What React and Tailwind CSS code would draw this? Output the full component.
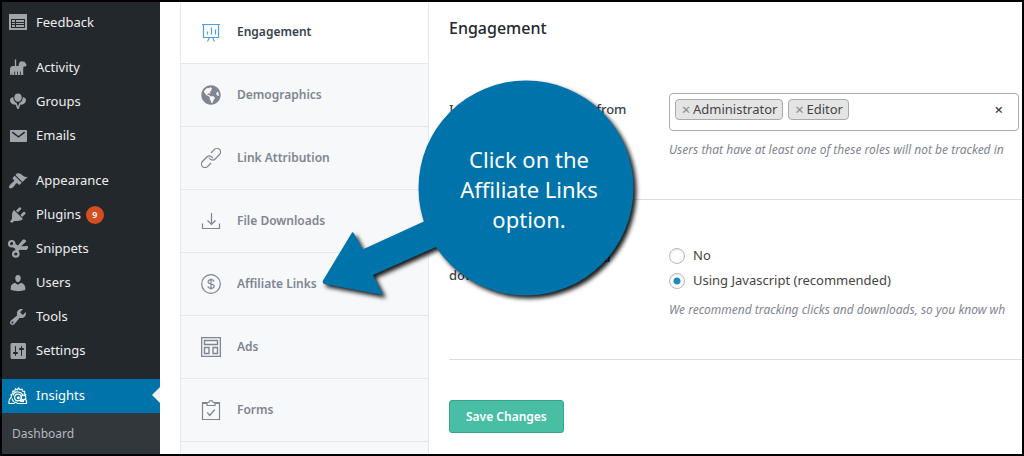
import React from "react";
import { FaGlobeAmericas } from "react-icons/fa";

const Dash = ({ children, className = "text-[#a0a5aa]" }) => (
  <svg viewBox="0 0 20 20" className={`size-5 shrink-0 fill-current ${className}`} aria-hidden="true">
    {children}
  </svg>
);

const menuIcons = {
  Feedback: (
    <Dash>
      <path fillRule="evenodd" d="M1 1h18v16H1zM3 6v9h14V6zM4 7h3v2H4zM4 10h3v1H4zM4 12h3v2H4zM8 7h8v2H8zM8 10h8v1H8zM8 12h8v2H8z" />
    </Dash>
  ),
  Activity: (
    <Dash>
      <path d="M6.800 1.500h1.400V8h2.300l.6-2.600c.3-1.300 1.300-2.200 2.600-2.200l1.800.6.800-.6.500 1.300c1 .5 1.700 1.600 1.700 2.900l-.9 1.100h-2.100l-.3 2.500V17h-2.200v-3.500h-.8V17H10v-3.500h-.8V17H7.100v-3.500h-.8V17H4.100v-3.500L3.500 17H2v-5.500C2 9.300 3 8 5 8h1.800z" />
    </Dash>
  ),
  Groups: (
    <Dash>
      <path d="M10 1.500c2.200 0 3.700 1.700 3.700 3.900S12.200 9.800 10 9.800 6.300 7.600 6.300 5.400 7.800 1.500 10 1.500z" />
      <path d="M5.200 5.300C3.400 5.100 2 6.500 2 8.300c0 2.300 1.700 3.900 3.700 4.200l2 .3L9.300 17h1.400l1.600-4.200 2-.3c2-.3 3.700-1.900 3.700-4.200 0-1.800-1.400-3.200-3.200-3-.1 2.500-1.300 4.700-3.300 5.500L10 14.500l-1.500-3.700C6.500 10 5.300 7.800 5.200 5.300z" />
    </Dash>
  ),
  Emails: (
    <Dash>
      <path fillRule="evenodd" d="M3 4h15c.6 0 1 .4 1 1v10c0 .6-.4 1-1 1H3c-.6 0-1-.4-1-1V5c0-.6.4-1 1-1zm7.500 7.800 6.700-5-1-1.200-5.700 4.300-5.700-4.300-1 1.200z" />
    </Dash>
  ),
  Appearance: (
    <Dash>
      <path d="M14.480 11.060L7.410 3.990l1.500-1.500c.5-.56 2.3-.47 3.510.32 1.210.8 1.430 1.280 2.910 2.100 1.180.64 2.450 1.260 4.450.85zm-.71.71L6.700 4.700 4.930 6.470c-.39.39-.39 1.020 0 1.410l1.060 1.060c.39.39.39 1.030 0 1.420-.6.6-1.430 1.110-2.210 1.690-.35.26-.7.53-1.010.84C1.430 14.230.4 16.080 1.400 17.070c.99 1 2.840-.03 4.180-1.360.31-.31.58-.66.85-1.020.57-.78 1.080-1.610 1.690-2.210.39-.39 1.020-.39 1.410 0l1.060 1.060c.39.39 1.020.39 1.410 0z" />
    </Dash>
  ),
  Plugins: (
    <Dash>
      <path d="M13.110 4.360L9.870 7.600 8 5.730l3.240-3.240c.35-.34 1.050-.2 1.560.32.52.51.66 1.210.31 1.550zm-8 1.770l.91-1.120 9.010 9.010-1.190.84c-.71.71-2.630 1.160-3.820 1.160H6.140L4.900 17.260c-.59.59-1.540.59-2.120 0-.59-.58-.59-1.530 0-2.120l1.240-1.240v-3.880c0-1.130.4-3.190 1.090-3.890zm7.260 3.970l3.240-3.240c.34-.35 1.040-.21 1.550.31.52.51.66 1.210.31 1.550l-3.240 3.250z" />
    </Dash>
  ),
  Snippets: (
    <Dash>
      <g fill="none" stroke="currentColor" strokeWidth="2.200">
        <circle cx="3.700" cy="4.700" r="2.700" />
        <circle cx="7.800" cy="15" r="2.700" />
      </g>
      <path d="M5.600 3.800 10 6.400 14.500.9c1.400-.9 3.300-.2 3.900 1.300l-5.200 5 6.700-.2c.6 1.900-.5 3.900-2.500 4.100l-5.800-.4-2 3-2.600-.7.3-3.200-3.700-2.400z" />
    </Dash>
  ),
  Users: (
    <Dash>
      <path d="M10 9.250c-2.270 0-2.730-3.440-2.730-3.440C7 4.020 7.820 2 9.970 2c2.160 0 2.980 2.020 2.710 3.810 0 0-.41 3.440-2.680 3.440zm0 2.570L12.720 10c2.390 0 4.520 2.330 4.520 4.530v2.490s-3.650 1.130-7.240 1.130c-3.650 0-7.240-1.130-7.240-1.130v-2.490c0-2.250 1.940-4.480 4.470-4.480z" />
    </Dash>
  ),
  Tools: (
    <Dash>
      <path d="M16.680 9.770c-1.340 1.340-3.300 1.670-4.950.99l-5.410 6.520c-.99.99-2.590.99-3.580 0s-.99-2.590 0-3.570l6.520-5.420c-.68-1.650-.35-3.610.99-4.950 1.280-1.280 3.120-1.620 4.720-1.060l-2.890 2.890 2.820 2.820 2.860-2.870c.53 1.580.18 3.390-1.080 4.650zM3.810 16.210c.4.39 1.040.39 1.430 0 .4-.4.4-1.040 0-1.430-.39-.4-1.030-.4-1.430 0-.39.39-.39 1.030 0 1.430z" />
    </Dash>
  ),
  Settings: (
    <Dash>
      <path d="M18 16V4c0-1.100-.4-2-1-2H4c-1.100 0-1.500.9-1.500 2v12c0 1.100.4 2 1.500 2h13c.6 0 1-.9 1-2zM8 11h1c.55 0 1 .45 1 1s-.45 1-1 1H8v1.500c0 .28-.22.5-.5.5s-.5-.22-.5-.5V13H6c-.55 0-1-.45-1-1s.45-1 1-1h1V5.500c0-.28.22-.5.5-.5s.5.22.5.5V11zm5-2h-1c-.55 0-1-.45-1-1s.45-1 1-1h1V5.500c0-.28.22-.5.5-.5s.5.22.5.5V7h1c.55 0 1 .45 1 1s-.45 1-1 1h-1v5.500c0 .28-.22.5-.5.5s-.5-.22-.5-.5V9z" />
    </Dash>
  ),
  Insights: (
    <Dash className="text-white">
      <g fill="none" stroke="currentColor" strokeWidth="1.200" strokeLinejoin="round">
        <path d="M3.500 11 3 8.500l2-.8L4.800 5l2 .2.700-2.500 1.800 1.200 1.300-2 1.300 1.900 2.100-.8.500 2.200 2.200.1-.3 2.200 1.300 1.200-1 1.500" />
        <path d="M5 9.500C6 6.500 8 5.500 10.500 6c2.500.3 4 1.800 4.500 3.500M3.500 11c-2 1.500-2.800 4-2.500 6.500h5l1-1.500 3 1.500h8.500c.4-2-.2-3.700-1.500-4.800M4 12.500 5.500 16" />
        <circle cx="10" cy="11.500" r="3.300" />
        <circle cx="15.500" cy="11.500" r="2.300" />
      </g>
      <circle cx="10.300" cy="11.800" r="1.500" />
      <path d="M12 14h4v2h-4z" />
    </Dash>
  ),
};

const menuGroups = [
  ["Feedback"],
  ["Activity", "Groups", "Emails"],
  ["Appearance", "Plugins", "Snippets", "Users", "Tools", "Settings"],
  ["Insights"],
];

const Line = ({ children, className = "" }) => (
  <svg viewBox="0 0 20 20" className={`size-5 shrink-0 fill-none stroke-current ${className}`} strokeWidth="1.200" aria-hidden="true">
    {children}
  </svg>
);

const tabs = [
  {
    name: "Engagement",
    icon: (
      <Line className="text-[#509fe2]">
        <path d="M1 2.500h18M2.500 2.500v13h15v-13M6.500 12.500v-3M10.500 12.500v-7M14.500 12.500v-5M8.500 15.500 6.500 19.500M11.500 15.500l2 4" />
      </Line>
    ),
  },
  { name: "Demographics", icon: <FaGlobeAmericas className="size-5 shrink-0" aria-hidden="true" /> },
  {
    name: "Link Attribution",
    icon: (
      <Line>
        <g transform="rotate(-45 10 10)">
          <path d="M6.500 13.600H1.500a3.600 3.600 0 0 1 0-7.200h6.300a3.600 3.600 0 0 1 3.200 5.200" />
          <path d="M13.500 6.400h5a3.600 3.600 0 0 1 0 7.200h-6.300a3.600 3.600 0 0 1-3.200-5.200" />
        </g>
      </Line>
    ),
  },
  {
    name: "File Downloads",
    icon: (
      <Line>
        <path d="M1.500 12.500v5h17v-5M10.500 2v11.500M6.500 9.500l4 4 4-4" />
      </Line>
    ),
  },
  {
    name: "Affiliate Links",
    icon: (
      <Line>
        <circle cx="10" cy="10" r="9.300" />
        <path d="M10 4.500v11M13 7.600c-.3-1.200-1.400-1.900-3-1.900-1.700 0-2.900.8-2.900 2.100 0 3 6 1.400 6 4.400 0 1.300-1.200 2.100-3.100 2.100-1.700 0-2.900-.8-3.200-2" />
      </Line>
    ),
  },
  {
    name: "Ads",
    icon: (
      <Line>
        <path d="M.6.600h18.800v18.800H.6zM3.500 3.500h13v4h-13zM3.500 10.500h4.500v6H3.500zM12 10.500h4.500v6H12z" strokeWidth="1.400" />
      </Line>
    ),
  },
  {
    name: "Forms",
    icon: (
      <Line>
        <path d="M6 2.500H1.500v17h17v-17H14M1.500 3.500H6M14 3.500h4.500M6 2.500v3h8v-3h-1.800c-.2-1.200-1-1.900-2.200-1.900s-2 .7-2.200 1.900zM6.300 12.500l2.500 3 5-6" />
      </Line>
    ),
  },
];

function AdminMenu() {
  return (
    <nav aria-label="Admin menu" className="flex w-[158px] shrink-0 flex-col bg-[#23282d] pt-1 text-[13px]">
      <div className="flex flex-col gap-[11px]">
        {menuGroups.map((group) => (
          <ul key={group[0]}>
            {group.map((name) => (
              <li key={name}>
                <a
                  href="#"
                  className={`relative flex h-[34px] items-center gap-2 pl-[6px] ${name === "Insights" ? "bg-[#0073aa] text-white" : "text-[#eeeeee]"}`}
                >
                  {menuIcons[name]}
                  {name}
                  {name === "Plugins" && (
                    <span className="-ml-[3px] flex size-[18px] items-center justify-center rounded-full bg-[#d54e21] text-[9px] font-semibold text-white">9</span>
                  )}
                  {name === "Insights" && (
                    <span className="absolute top-2 right-0 border-y-8 border-r-8 border-y-transparent border-r-[#f1f1f1]" />
                  )}
                </a>
              </li>
            ))}
          </ul>
        ))}
      </div>
      <div className="grow bg-[#32373c] px-[10px] py-3">
        <a href="#" className="block text-[12px] leading-[18px] text-[#b4b9be]">Dashboard</a>
      </div>
    </nav>
  );
}

function SettingsTabs() {
  return (
    <nav aria-label="Settings sections" className="-mt-px ml-5 w-[249px] shrink-0 overflow-hidden border-x border-[#e3e8ec] bg-[#f6f8fa]">
      {tabs.map(({ name, icon }, i) => (
        <a
          key={name}
          href="#"
          className={`flex h-[63px] items-center gap-4 border-b border-[#e3e8ec] pl-5 text-[12px] font-semibold ${i === 0 ? "bg-white text-[#393f4c]" : "text-[#7f8591]"}`}
        >
          {icon}
          {name}
        </a>
      ))}
    </nav>
  );
}

const Role = ({ name }) => (
  <li className="flex h-[21px] items-center gap-[2px] rounded-[4px] border border-[#aaaaaa] bg-[#e4e4e4] px-[5px] text-[13px] text-[#444444]">
    <button type="button" aria-label={`Remove ${name}`} className="w-[10px] text-center text-[15px] leading-none text-[#888888]">×</button>
    {name}
  </li>
);

const Radio = ({ label, checked }) => (
  <label className="flex h-[25px] items-center gap-2">
    <input
      type="radio"
      name="tracking"
      defaultChecked={checked}
      className="size-4 appearance-none rounded-full border border-[#b4b9be] bg-white shadow-[inset_0_1px_2px_rgba(0,0,0,0.1)] checked:bg-[radial-gradient(circle,#1e8cbe_3px,#ffffff_4px)]"
    />
    {label}
  </label>
);

const Hint = ({ children }) => (
  <p className="pt-2 text-[12px] leading-[18px] whitespace-nowrap text-[#7f8591] italic">{children}</p>
);

function SettingsPanel() {
  return (
    <main className="min-w-0 grow overflow-hidden pl-5 text-[13px] text-[#444444]">
      <h1 className="pt-[14px] text-[16px] leading-6 font-medium text-[#23282d]">Engagement</h1>
      <section className="mt-[53px] flex h-[107px] gap-[30px] border-b border-[#dddddd]">
        <h2 className="w-[190px] shrink-0 pt-[7px] text-[13px] leading-[18px] font-medium text-[#393f4c]">
          Ignore these user roles from tracking
        </h2>
        <div className="min-w-0 grow">
          <div className="mr-[3px] mb-[2px] flex h-[38px] items-start justify-between rounded-[4px] border border-[#aaaaaa] p-[5px]">
            <ul className="flex gap-[5px]">
              <Role name="Administrator" />
              <Role name="Editor" />
            </ul>
            <button type="button" aria-label="Remove all roles" className="mr-[10px] text-[15px] leading-[21px] font-semibold">×</button>
          </div>
          <Hint>Users that have at least one of these roles will not be tracked in</Hint>
        </div>
      </section>
      <section className="flex h-[160px] gap-[30px] border-b border-[#dddddd] pt-[43px]">
        <h2 className="w-[190px] shrink-0 pt-[5px] text-[13px] leading-[18px] font-medium text-[#393f4c]">
          Track outbound clicks and downloads
        </h2>
        <div className="min-w-0 grow">
          <Radio label="No" />
          <Radio label="Using Javascript (recommended)" checked />
          <Hint>We recommend tracking clicks and downloads, so you know wh</Hint>
        </div>
      </section>
      <button type="button" className="mt-10 h-[33px] rounded-[3px] border border-[#35a588] bg-[#48bfa5] px-4 text-[12px] font-semibold text-white">
        Save Changes
      </button>
    </main>
  );
}

function Callout() {
  return (
    <div className="pointer-events-none absolute top-[78px] left-[318px] h-[230px] w-[330px]">
      <svg viewBox="0 0 330 230" className="absolute inset-0 size-full overflow-visible fill-[#0073aa] drop-shadow-[3px_3px_2px_rgba(0,0,0,0.9)]" aria-hidden="true">
        <circle cx="206" cy="108" r="107.500" />
        <path d="M3 200.500 32 152.500Q33 151.500 34 153.500L42.500 169.500 118 135 140 158 116 167 53 195 63 215 4 204Q2 202.500 3 200.500z" />
      </svg>
      <p className="relative ml-[94px] w-[230px] pt-16 text-center text-[22px] leading-[30px] text-white">
        Click on the
        <br />
        Affiliate Links
        <br />
        option.
      </p>
    </div>
  );
}

export default function App() {
  return (
    <div className="relative flex h-screen overflow-hidden border-2 border-black bg-white font-['Noto_Sans','Open_Sans',sans-serif]">
      <AdminMenu />
      <SettingsTabs />
      <SettingsPanel />
      <Callout />
    </div>
  );
}
